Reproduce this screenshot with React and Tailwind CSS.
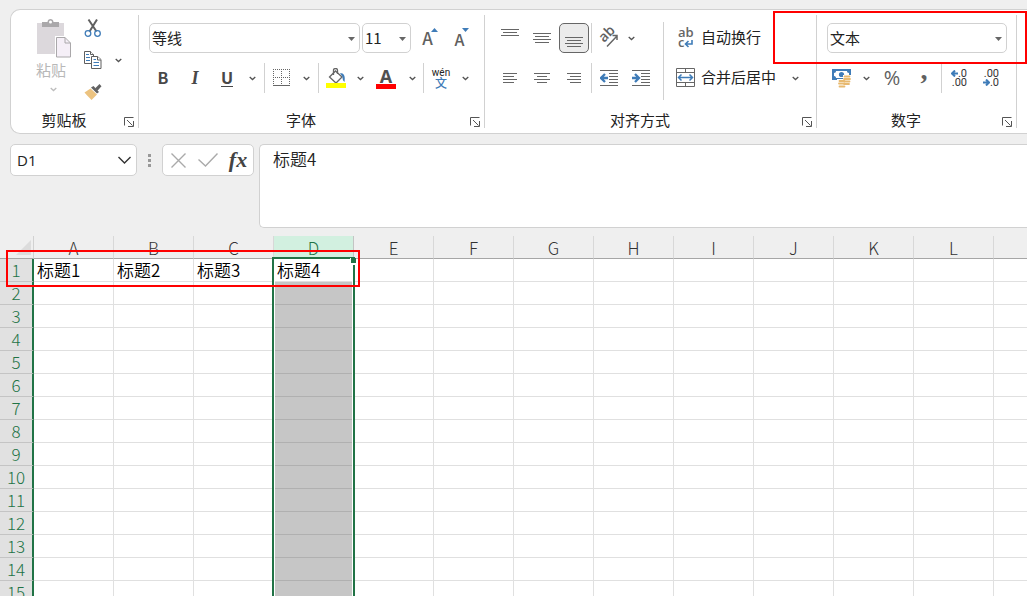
import { useState } from 'react'

const COLUMNS = 'ABCDEFGHIJKLMNOP'.split('')
const ROWS = Array.from({ length: 30 }, (_, i) => i + 1)
const TITLES = { A: '标题1', B: '标题2', C: '标题3', D: '标题4' }
const SELECTED = 'D'

function Chevron({ label, faint }) {
  return (
    <button type="button" aria-label={label} className="flex h-[30px] w-3.5 shrink-0 items-center justify-center">
      <svg width="7" height="5" viewBox="0 0 7 5" fill="none" stroke={faint ? '#bdbdbd' : '#555'} strokeWidth="1.3">
        <path d="M.7 1l2.8 2.6L6.3 1" />
      </svg>
    </button>
  )
}

function Tool({ label, className = 'w-[30px]', children }) {
  return (
    <button type="button" aria-label={label} className={`flex h-[30px] shrink-0 items-center justify-center ${className}`}>
      {children}
    </button>
  )
}

function Divider({ className = 'h-[30px]' }) {
  return <div className={`w-px shrink-0 bg-[#d1d1d1] ${className}`} />
}

function RibbonSelect({ label, options, className }) {
  return (
    <div className={`relative h-[30px] shrink-0 ${className}`}>
      <select aria-label={label} className="h-full w-full appearance-none rounded-[5px] border border-[#d1d1d1] bg-white pl-0.5 text-[15px] text-[#222]">
        {options.map((option) => (
          <option key={option}>{option}</option>
        ))}
      </select>
      <svg className="pointer-events-none absolute top-3.5 right-[5px]" width="7" height="4" viewBox="0 0 7 4" fill="#666">
        <path d="M0 0h7L3.5 4z" />
      </svg>
    </div>
  )
}

function Group({ label, className = '', children }) {
  return (
    <>
      <section aria-label={label} className={`flex shrink-0 flex-col ${className}`}>
        <div className="h-[100px]">{children}</div>
        <div className="flex h-5 items-center">
          <span className="flex-1 text-center text-[15px] leading-5 text-[#222]">{label}</span>
          <button type="button" aria-label={`${label}设置`} className="flex w-[21px] justify-end pt-1 pr-1">
            <svg width="10" height="10" viewBox="0 0 10 10" fill="none" stroke="#555">
              <path d="M.5 8.5v-8h9M3 3l5.5 5.5M9.500 4v5.500H4" />
            </svg>
          </button>
        </div>
      </section>
      <Divider className="mt-[5px] h-[113px]" />
    </>
  )
}

// each line is [x1, x2, y]
function Lines({ lines }) {
  return (
    <svg width="20" height="20" viewBox="0 0 20 20" stroke="#666">
      {lines.map(([x1, x2, y]) => (
        <path key={y} d={`M${x1} ${y}.5H${x2}`} />
      ))}
    </svg>
  )
}

function ClipboardGroup() {
  return (
    <Group label="剪贴板" className="w-[127px]">
      <div className="flex pt-2">
        <div className="flex w-[61px] flex-col items-end">
          <button type="button" className="flex flex-col items-end text-[15px] leading-5 text-[#b8b8b8]">
            <svg width="37" height="40" viewBox="0 0 37 40">
              <path d="M2 5h27v31H2z" fill="#dcd8dc" />
              <path d="M7 4h5.500C12.500 0 18.500 0 18.500 4H24v5H7z" fill="#aaa8aa" />
              <circle cx="15.500" cy="4" r="1.500" fill="#fff" />
              <path d="M20 18h11l6 6v16H20z" fill="#fff" />
              <path d="M21.500 19.500h8.500l5.500 5.500v14h-14z" fill="#f5eff7" stroke="#aaa8aa" />
              <path d="M30 19.500v5.500h5.500" fill="none" stroke="#aaa8aa" />
            </svg>
            <span className="mt-0.5 mr-1.5">粘贴</span>
          </button>
          <div className="-mt-1.5 mr-3">
            <Chevron label="粘贴选项" faint />
          </div>
        </div>
        <div className="-mt-[5px] flex flex-col gap-0.5 pl-1.5">
          <Tool label="剪切">
            <svg width="18" height="20" viewBox="0 0 18 20" fill="none">
              <path d="M4.500 1.500l8 12M13 1.500L5.500 13.500" stroke="#606060" strokeWidth="2" />
              <circle cx="4" cy="15.500" r="2.800" stroke="#3f7cb8" strokeWidth="1.300" />
              <circle cx="13.500" cy="15.500" r="2.800" stroke="#3f7cb8" strokeWidth="1.300" />
            </svg>
          </Tool>
          <div className="flex items-center">
            <Tool label="复制">
              <svg width="18" height="20" viewBox="0 0 18 20" fill="#fff" stroke="#5f5f5f">
                <path d="M.5 1.500h6l3 3v9h-9z" />
                <path d="M6.500 1.500v3h3" />
                <path d="M2 4.500h3M2 7.500h4M2 10.500h4" stroke="#3f7cb8" />
                <path d="M7.500 6.500h6l3.500 3v9H7.500z" />
                <path d="M13.500 6.500v3.500H17" />
                <path d="M9.500 9.500h2.500M9.500 12.500h5.500M9.500 15.500h5.500" stroke="#3f7cb8" />
              </svg>
            </Tool>
            <div className="pl-[3px]">
              <Chevron label="复制选项" />
            </div>
          </div>
          <Tool label="格式刷">
            <svg width="18" height="17" viewBox="0 0 18 17">
              <path d="M.5 8.500L6.500 4.500l6.500 6L7.500 16C6 14 3 12 .5 8.500z" fill="#ecc380" />
              <path d="M7 3.500L9.500 2l5.500 6-2 1.500z" fill="#626262" />
              <path d="M11 4.500L15.500 0l2 2.200-4 4.600z" fill="#626262" />
            </svg>
          </Tool>
        </div>
      </div>
    </Group>
  )
}

function FontGroup() {
  return (
    <Group label="字体" className="w-[345px]">
      <div className="flex flex-col gap-2.5 pt-[13px] pl-2.5">
        <div className="flex">
          <RibbonSelect label="字体" options={['等线', '宋体', '黑体']} className="w-[211px]" />
          <RibbonSelect label="字号" options={['11', '12', '14']} className="ml-0.5 w-[49px]" />
          <Tool label="增大字号" className="ml-1 w-[30px]">
            <span className="text-[17px] font-medium text-[#606060]">A</span>
            <svg className="-mt-4 -ml-0.5" width="7" height="4" fill="#3f7cb8"><path d="M0 4h7L3.500 0z" /></svg>
          </Tool>
          <Tool label="减小字号" className="ml-0.5 w-[30px]">
            <span className="pt-0.5 text-base font-medium text-[#606060]">A</span>
            <svg className="-mt-4 -ml-0.5" width="7" height="4" fill="#3f7cb8"><path d="M0 0h7L3.500 4z" /></svg>
          </Tool>
        </div>
        <div className="flex">
          <Tool label="加粗" className="w-7"><span className="pb-0.5 text-base font-bold text-[#484848]">B</span></Tool>
          <Tool label="倾斜" className="w-9"><span className="font-['Liberation_Serif',serif] text-lg font-bold text-[#484848] italic">I</span></Tool>
          <Tool label="下划线" className="w-7">
            <span className="border-b border-[#484848] font-['Open_Sans',sans-serif] text-base leading-4 font-bold text-[#484848]">U</span>
          </Tool>
          <div className="mr-[5px] ml-1"><Chevron label="下划线选项" /></div>
          <Divider />
          <Tool label="边框" className="w-[34px]">
            <svg width="18" height="18" viewBox="0 0 18 18" fill="none" stroke="#666">
              <path d="M0 .5h17M0 8.500h17M.5 0v16M8.500 0v16M16.500 0v16" strokeDasharray="1 1" />
              <path d="M0 16.500h17" />
            </svg>
          </Tool>
          <div className="mr-[5px]"><Chevron label="边框选项" /></div>
          <Divider />
          <Tool label="填充颜色" className="w-[34px]">
            <svg width="20" height="20" viewBox="0 0 20 20" fill="none" stroke="#666">
              <path d="M3.500 9l6-6 6.500 6-6 6z" fill="#fff" strokeWidth="1.300" />
              <path d="M7.500 7V2c0-2 4-2 4 0v4" strokeWidth="1.300" />
              <path d="M14 5c4 0 5.500 3 4.500 9-1.500-1-2-3-2-5z" fill="#3f7cb8" stroke="none" />
              <path d="M0 15h20v5H0z" fill="#ff0" stroke="none" />
            </svg>
          </Tool>
          <Chevron label="填充颜色选项" />
          <Tool label="字体颜色" className="w-[38px]">
            <span className="flex w-5 flex-col items-center border-b-[5px] border-[#f00] font-['Open_Sans',sans-serif] text-lg leading-4 font-bold text-[#505050]">A</span>
          </Tool>
          <div className="mr-1"><Chevron label="字体颜色选项" /></div>
          <Divider />
          <Tool label="拼音" className="w-[34px]">
            <span className="flex flex-col items-center">
              <span className="font-['Roboto',sans-serif] text-[10px] leading-[9px] text-[#222]">wén</span>
              <span className="text-xs leading-[12px] font-medium text-[#3f7cb8]">文</span>
            </span>
          </Tool>
          <Chevron label="拼音选项" />
        </div>
      </div>
    </Group>
  )
}

function AlignGroup() {
  return (
    <Group label="对齐方式" className="w-[331px]">
      <div className="flex">
        <div className="flex w-[178px] flex-col gap-2.5 pt-[13px] pl-2.5">
          <div className="flex gap-0.5">
            <Tool label="顶端对齐"><Lines lines={[[1, 19, 1], [3, 17, 4], [1, 19, 7]]} /></Tool>
            <Tool label="垂直居中"><Lines lines={[[1, 19, 5], [3, 17, 8], [1, 19, 11], [3, 17, 14]]} /></Tool>
            <Tool label="底端对齐" className="w-[30px] rounded-[5px] border border-[#666] bg-[#ebebeb]">
              <Lines lines={[[1, 19, 9], [3, 17, 12], [1, 19, 15], [3, 17, 18]]} />
            </Tool>
            <Divider />
            <Tool label="方向">
              <svg className="overflow-visible font-['Open_Sans',sans-serif]" width="20" height="20" viewBox="0 0 20 20" fill="none" stroke="#666" strokeWidth="1.500">
                <text x="5" y="15" transform="rotate(-45 5 15)" fontSize="14" fontWeight="600" fill="#606060" stroke="none">ab</text>
                <path d="M8 18.500L18 8M13.500 7.500H18V12" />
              </svg>
            </Tool>
            <div className="-ml-0.5"><Chevron label="方向选项" /></div>
          </div>
          <div className="flex gap-0.5">
            <Tool label="左对齐"><Lines lines={[[3, 17, 5], [3, 14, 8], [3, 17, 11], [3, 14, 14]]} /></Tool>
            <Tool label="居中"><Lines lines={[[2, 18, 5], [5, 15, 8], [2, 18, 11], [5, 15, 14]]} /></Tool>
            <Tool label="右对齐"><Lines lines={[[3, 17, 5], [6, 17, 8], [3, 17, 11], [6, 17, 14]]} /></Tool>
            <Divider />
            <Tool label="减少缩进量">
              <svg width="18" height="18" viewBox="0 0 18 18" fill="none" stroke="#666">
                <path d="M0 1.500h18M9 4.500h9M9 7.500h9M9 10.500h9M9 13.500h9M0 16.500h18" />
                <path d="M8 9H1.500M5 5L1 9l4 4" stroke="#3f7cb8" strokeWidth="2.300" />
              </svg>
            </Tool>
            <Tool label="增加缩进量">
              <svg width="18" height="18" viewBox="0 0 18 18" fill="none" stroke="#666">
                <path d="M0 1.500h18M9 4.500h9M9 7.500h9M9 10.500h9M9 13.500h9M0 16.500h18" />
                <path d="M0 9h6.500M3 5l4 4-4 4" stroke="#3f7cb8" strokeWidth="2.300" />
              </svg>
            </Tool>
          </div>
        </div>
        <Divider className="mt-3 h-[78px]" />
        <div className="flex flex-col items-start gap-2.5 pt-3 pl-3 text-[15px] text-[#222]">
          <button type="button" className="flex h-[30px] items-center gap-[5px]">
            <span className="relative flex w-5 flex-col pl-0.5 text-left font-['Open_Sans',sans-serif] text-[13px] leading-[10px] font-semibold text-[#666]">
              <span>ab</span>
              <span>c</span>
              <svg className="absolute right-[3px] -bottom-px" width="9" height="8" fill="none" stroke="#3f7cb8" strokeWidth="1.600">
                <path d="M8 0v4H1.500M4.500 1L1.500 4l3 3" />
              </svg>
            </span>
            自动换行
          </button>
          <div className="flex items-center">
            <button type="button" className="flex h-[30px] items-center gap-[5px]">
              <svg width="20" height="20" viewBox="0 0 20 20" fill="none" stroke="#666">
                <path d="M.5 .5h18v18H.5zM.5 4.500h18M.5 14.500h18M9.500 .5v4M9.500 14.500v4" />
                <path d="M3 9.500h13M5.500 6.500l-3 3 3 3M13.500 6.500l3 3-3 3" stroke="#3f7cb8" strokeWidth="1.500" />
              </svg>
              合并后居中
            </button>
            <div className="pt-px pl-3"><Chevron label="合并选项" /></div>
          </div>
        </div>
      </div>
    </Group>
  )
}

function NumberGroup() {
  return (
    <Group label="数字" className="w-[199px]">
      <div className="flex flex-col gap-2.5 pt-[13px] pl-2.5">
        <RibbonSelect label="数字格式" options={['文本', '常规', '数值']} className="w-[180px]" />
        <div className="flex gap-0.5">
          <Tool label="会计数字格式">
            <svg width="20" height="20" viewBox="0 0 20 20">
              <path d="M0 1h19v11H0z" fill="#3f7cb8" />
              <path d="M2 5c1.500 0 2-1 2-2h11c0 1 .5 2 2 2v3H15c0 1 0 2-1 2H4c0-1-.5-2-2-2z" fill="#fff" />
              <circle cx="9.500" cy="6.500" r="2.600" fill="#3f7cb8" />
              <path d="M11 7h8v10h-4v3H5v-9h6z" fill="#fff" />
              <path d="M12.500 8.500h5M12 11h6M12.500 13.500h5M12 16h5M7.500 13h5M7 15.500h5M7.500 18.500h5" stroke="#e8b96f" strokeWidth="1.800" strokeLinecap="round" />
            </svg>
          </Tool>
          <Chevron label="会计格式选项" />
          <Tool label="百分比样式" className="ml-0.5 w-[30px]"><span className="font-['Open_Sans',sans-serif] text-xl text-[#606060]">%</span></Tool>
          <Tool label="千位分隔样式">
            <span className="pb-4 font-['Liberation_Serif',serif] text-[28px] leading-4 font-bold text-[#606060]">,</span>
          </Tool>
          <Divider />
          <Tool label="增加小数位数">
            <span className="flex flex-col items-end font-['Roboto',sans-serif] text-[11px] leading-[9px] text-[#333]">
              <span className="flex items-center">
                <svg width="7" height="7" fill="none" stroke="#3f7cb8" strokeWidth="2"><path d="M7 3.500H2M4 .5l-3 3 3 3" /></svg>
                .0
              </span>
              <span>.00</span>
            </span>
          </Tool>
          <Tool label="减少小数位数">
            <span className="flex flex-col items-end font-['Roboto',sans-serif] text-[11px] leading-[9px] text-[#333]">
              <span>.00</span>
              <span className="flex items-center">
                <svg width="7" height="7" fill="none" stroke="#3f7cb8" strokeWidth="2"><path d="M0 3.500h5M3 .5l3 3-3 3" /></svg>
                .0
              </span>
            </span>
          </Tool>
        </div>
      </div>
    </Group>
  )
}

function FormulaBar({ value, onChange }) {
  return (
    <div className="mt-2.5 flex items-start pl-2.5 text-[#222]">
      <div className="flex h-8 w-[127px] shrink-0 items-center rounded-[5px] border border-[#d1d1d1] bg-white pr-[3px]">
        <input aria-label="名称框" defaultValue="D1" className="w-full min-w-0 pl-1.5 font-['Open_Sans',sans-serif] text-[15px] outline-none" />
        <button type="button" aria-label="名称列表" className="px-0.5">
          <svg width="13" height="8" viewBox="0 0 13 8" fill="none" stroke="#333" strokeWidth="1.400"><path d="M.5 1l6 6 6-6" /></svg>
        </button>
      </div>
      <div className="flex h-8 w-[25px] shrink-0 items-center justify-center">
        <svg width="3" height="13" fill="#999"><path d="M0 0h3v3H0zM0 5h3v3H0zM0 10h3v3H0z" /></svg>
      </div>
      <div className="flex h-8 w-[92px] shrink-0 items-center rounded-[5px] border border-[#d1d1d1] bg-white">
        <Tool label="取消">
          <svg width="15" height="15" fill="none" stroke="#aaa" strokeWidth="1.400"><path d="M.5 .5l14 14M14.500 .5l-14 14" /></svg>
        </Tool>
        <Tool label="输入">
          <svg width="20" height="14" fill="none" stroke="#aaa" strokeWidth="1.400"><path d="M.5 6.500l7 6.500L19.500 .5" /></svg>
        </Tool>
        <Tool label="插入函数">
          <span className="font-['Liberation_Serif',serif] text-[22px] leading-6 font-bold text-[#444] italic">fx</span>
        </Tool>
      </div>
      <textarea
        aria-label="编辑栏"
        value={value}
        onChange={(event) => onChange(event.target.value)}
        className="ml-[5px] h-[84px] min-w-0 flex-1 resize-none rounded-l-[5px] border border-r-0 border-[#d1d1d1] bg-white px-[13px] py-0.5 text-[17px] leading-6 font-[350] outline-none"
      />
    </div>
  )
}

function Sheet({ titles }) {
  return (
    <div className="relative mt-2 min-h-0 flex-1">
      <div className="h-full overflow-hidden">
        <table className="table-fixed border-separate border-spacing-0 text-[17px] leading-[22px]" style={{ width: 34 + COLUMNS.length * 80 }}>
          <colgroup>
            <col className="w-[34px]" />
            {COLUMNS.map((column) => (
              <col key={column} className="w-20" />
            ))}
          </colgroup>
          <thead>
            <tr className="h-[23px]">
              <th aria-label="全选" className="border-r border-b border-[#d1d1d1] border-b-[#a6a6a6] p-0">
                <svg className="mr-0.5 ml-auto" width="15" height="15" fill="#dcdcdc"><path d="M15 0v15H0z" /></svg>
              </th>
              {COLUMNS.map((column) => (
                <th
                  key={column}
                  scope="col"
                  className={
                    column === SELECTED
                      ? 'border-r border-b border-[#c4c4c4] bg-[#d2f0e0] p-0 pt-0.5 leading-5 font-light text-[#217346]'
                      : 'border-r border-b border-[#d8d8d8] border-b-[#a6a6a6] p-0 pt-0.5 leading-5 font-light text-[#333]'
                  }
                >
                  {column}
                </th>
              ))}
            </tr>
          </thead>
          <tbody className="bg-white">
            {ROWS.map((row) => (
              <tr key={row} className="h-[23px]">
                <th scope="row" className="border-r-2 border-b border-r-[#217346] border-b-[#c4c4c4] bg-[#e1e1e1] p-0 leading-[22px] font-light text-[#217346]">
                  {row}
                </th>
                {COLUMNS.map((column) => (
                  <td
                    key={column}
                    className={
                      column === SELECTED && row > 1
                        ? 'border-b border-[#b0b0b0] bg-[#c6c6c6] p-0'
                        : 'border-r border-b border-[#e0e0e0] p-0 pl-[3px] font-[350] text-black'
                    }
                  >
                    {row === 1 ? titles[column] : null}
                  </td>
                ))}
              </tr>
            ))}
          </tbody>
        </table>
        {/* frame around the selected column, with its fill handle */}
        <div className="pointer-events-none absolute top-[21px] bottom-0 left-[272px] w-[83px] border-2 border-b-0 border-[#217346]">
          <div className="h-full border-x border-white" />
          <div className="absolute -top-px -right-[3px] h-[7px] w-1.5 border-b-2 border-l border-white bg-[#217346]" />
        </div>
      </div>
      <div className="pointer-events-none absolute top-3.5 left-1.5 h-[37px] w-[354px] border-2 border-[#f00]" />
    </div>
  )
}

export default function App() {
  const [value, setValue] = useState('标题4')

  return (
    <main className="flex h-screen flex-col overflow-hidden bg-[#efefef] pt-[9px] font-['Noto_Sans_CJK_SC',sans-serif]">
      <header className="relative pl-2.5">
        <div className="flex overflow-hidden rounded-l-[10px] border border-r-0 border-[#d1d1d1] bg-white pb-[3px]">
          <ClipboardGroup />
          <FontGroup />
          <AlignGroup />
          <NumberGroup />
        </div>
        <div className="pointer-events-none absolute top-0.5 left-[773px] h-[53px] w-[254px] border-2 border-[#f00]" />
      </header>
      <FormulaBar value={value} onChange={setValue} />
      <Sheet titles={{ ...TITLES, [SELECTED]: value }} />
    </main>
  )
}
